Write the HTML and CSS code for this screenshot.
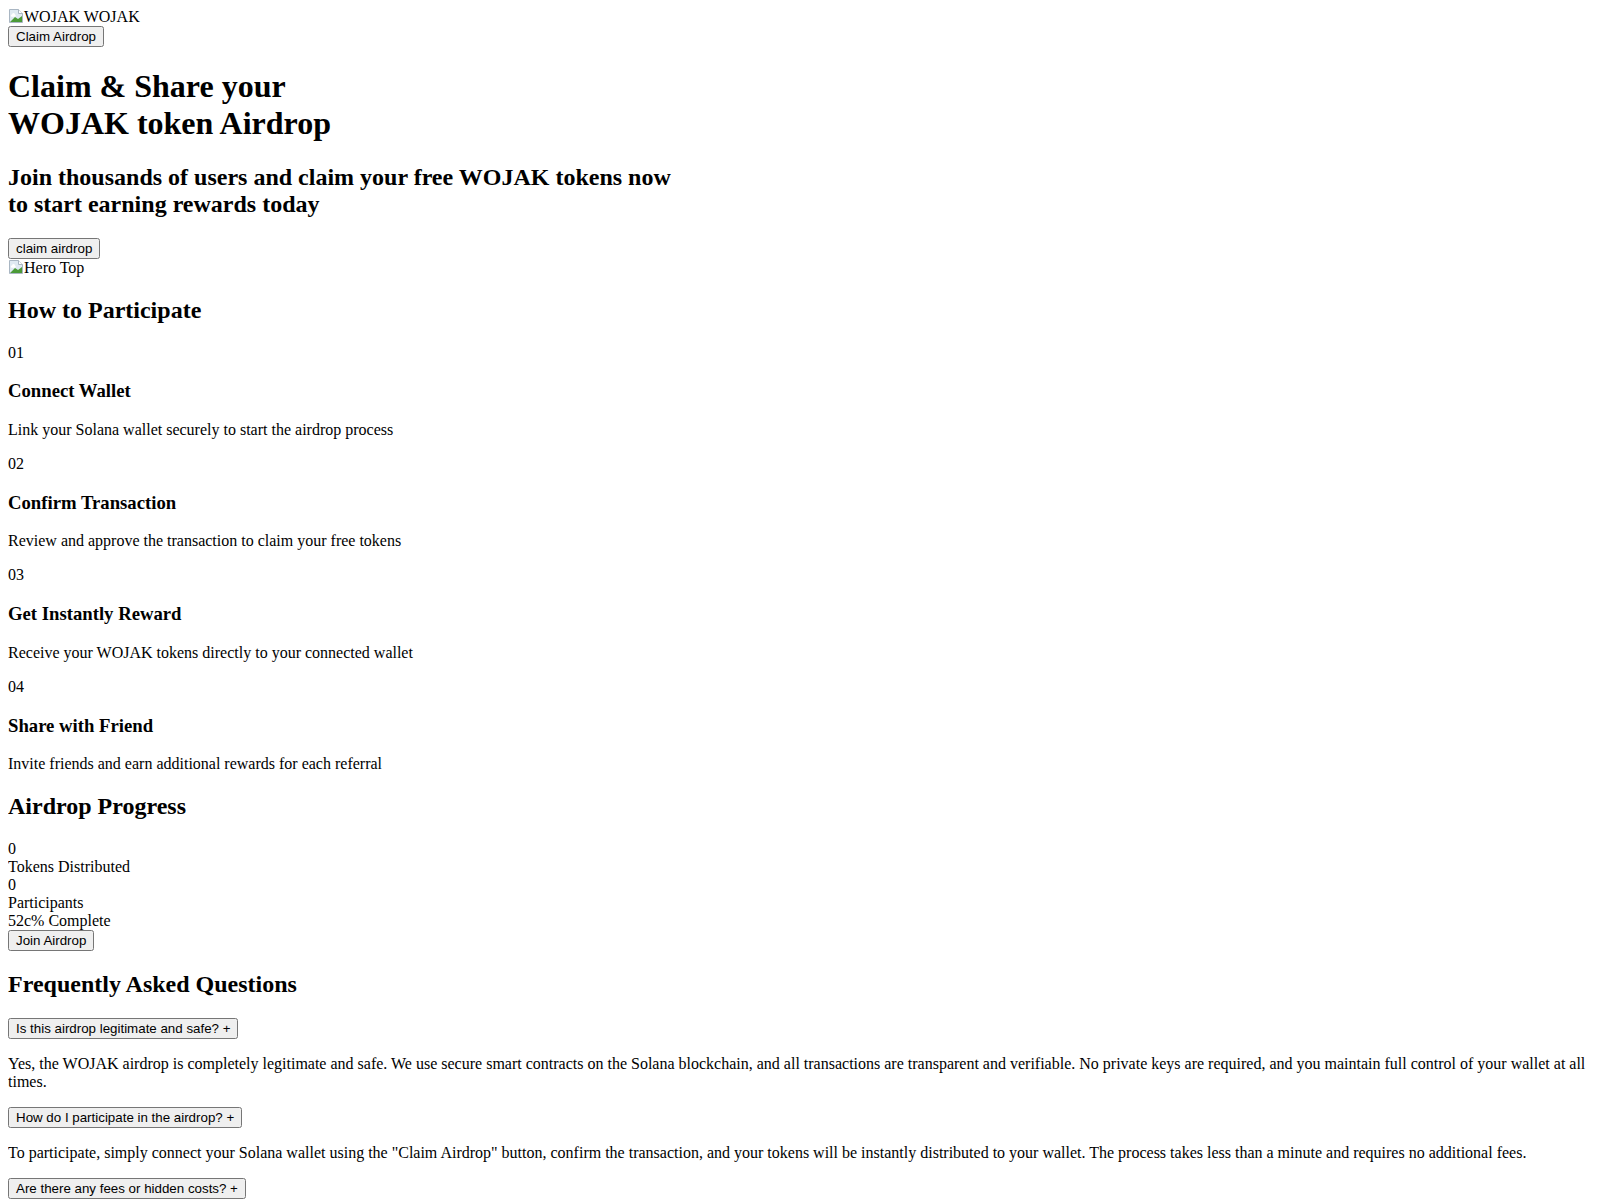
FILE: index.html
```html
<!DOCTYPE html>
<html lang="en">
<head>
    <meta charset="UTF-8">
    <meta name="viewport" content="width=device-width, initial-scale=1.0">
    <title>WOJAK Airdrop</title>
    <link rel="stylesheet" href="styles.css">
</head>
<body>
    <header class="nav">
        <div class="logo">
            <span class="broken-img"><svg class="broken-icon" width="16" height="16" viewBox="0 0 16 16"><path d="M1.5 1.5h9l4 4v9h-13z" fill="#dfe9f2" stroke="#a9b6c3"/><path d="M10.5 1.5v4h4" fill="#fff" stroke="#a9b6c3"/><path d="M2 14l5-5 3 2 4-3v6z" fill="#4b9a37"/><path d="M4 6.5a1.5 1.5 0 0 1 3 0a1.2 1.2 0 0 1 0 2.2h-3.2a1.1 1.1 0 0 1 .2-2.2z" fill="#fff"/></svg>WOJAK</span> WOJAK
        </div>
        <div class="nav-action">
            <button type="button">Claim Airdrop</button>
        </div>
    </header>

    <section class="hero">
        <h1>Claim &amp; Share your<br>WOJAK token Airdrop</h1>
        <h2>Join thousands of users and claim your free WOJAK tokens now<br>to start earning rewards today</h2>
        <div class="hero-action">
            <button type="button">claim airdrop</button>
        </div>
        <div class="hero-image">
            <span class="broken-img"><svg class="broken-icon" width="16" height="16" viewBox="0 0 16 16"><path d="M1.5 1.5h9l4 4v9h-13z" fill="#dfe9f2" stroke="#a9b6c3"/><path d="M10.5 1.5v4h4" fill="#fff" stroke="#a9b6c3"/><path d="M2 14l5-5 3 2 4-3v6z" fill="#4b9a37"/><path d="M4 6.5a1.5 1.5 0 0 1 3 0a1.2 1.2 0 0 1 0 2.2h-3.2a1.1 1.1 0 0 1 .2-2.2z" fill="#fff"/></svg>Hero Top</span>
        </div>
    </section>

    <section class="steps">
        <h2>How to Participate</h2>
        <div class="step">
            <p>01</p>
            <h3>Connect Wallet</h3>
            <p>Link your Solana wallet securely to start the airdrop process</p>
        </div>
        <div class="step">
            <p>02</p>
            <h3>Confirm Transaction</h3>
            <p>Review and approve the transaction to claim your free tokens</p>
        </div>
        <div class="step">
            <p>03</p>
            <h3>Get Instantly Reward</h3>
            <p>Receive your WOJAK tokens directly to your connected wallet</p>
        </div>
        <div class="step">
            <p>04</p>
            <h3>Share with Friend</h3>
            <p>Invite friends and earn additional rewards for each referral</p>
        </div>
    </section>

    <section class="progress">
        <h2>Airdrop Progress</h2>
        <div class="stat">
            <div>0</div>
            <div>Tokens Distributed</div>
        </div>
        <div class="stat">
            <div>0</div>
            <div>Participants</div>
        </div>
        <div class="progress-label">52c% Complete</div>
        <div>
            <button type="button">Join Airdrop</button>
        </div>
    </section>

    <section class="faq">
        <h2>Frequently Asked Questions</h2>
        <div class="faq-item">
            <div><button type="button">Is this airdrop legitimate and safe? +</button></div>
            <p>Yes, the WOJAK airdrop is completely legitimate and safe. We use secure smart contracts on the Solana blockchain, and all transactions are transparent and verifiable. No private keys are required, and you maintain full control of your wallet at all times.</p>
        </div>
        <div class="faq-item">
            <div><button type="button">How do I participate in the airdrop? +</button></div>
            <p>To participate, simply connect your Solana wallet using the "Claim Airdrop" button, confirm the transaction, and your tokens will be instantly distributed to your wallet. The process takes less than a minute and requires no additional fees.</p>
        </div>
        <div class="faq-item">
            <div><button type="button">Are there any fees or hidden costs? +</button></div>
            <p>No, there are no fees or hidden costs. The only cost is the standard Solana network fee, which is usually a fraction of a cent.</p>
        </div>
    </section>
</body>
</html>
```

FILE: styles.css
```css
body {
    font-family: "Liberation Serif", "Times New Roman", serif;
    color: #000;
    background: #fff;
}

button {
    font-family: "Liberation Sans", Arial, sans-serif;
    font-size: 13.3333px;
}

.broken-img {
    display: inline;
}

.broken-icon {
    vertical-align: -2px;
}
```
